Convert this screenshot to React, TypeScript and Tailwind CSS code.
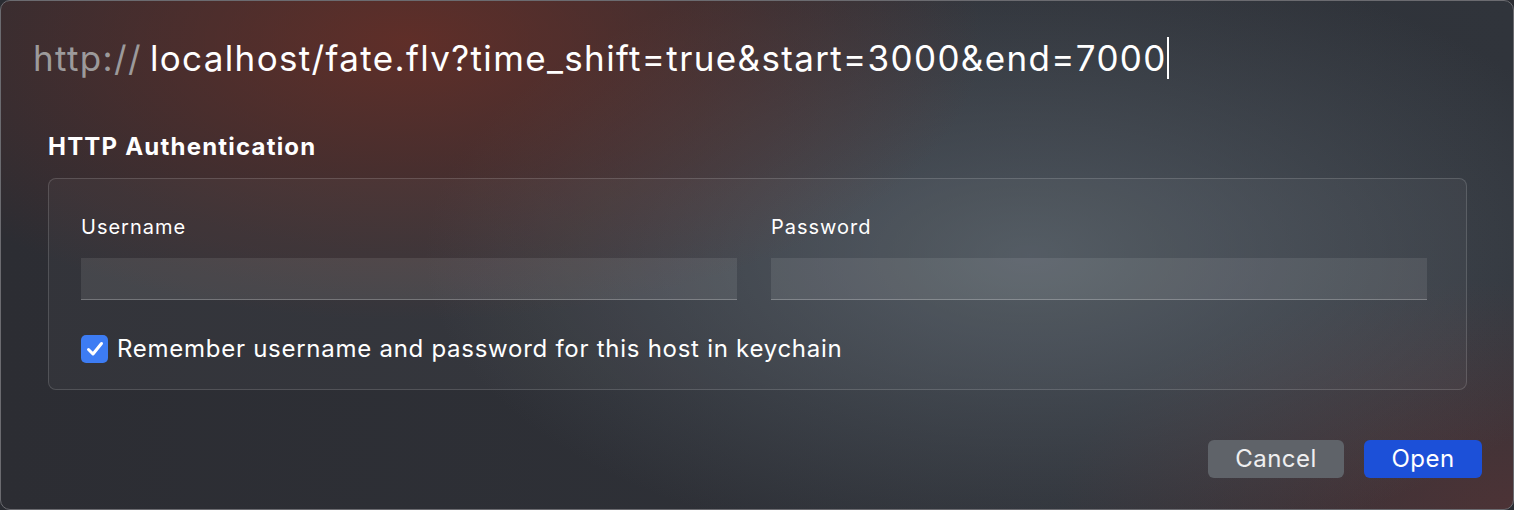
import React from "react";

export default function App() {
  const font = { fontFamily: '"Inter", "Noto Sans", sans-serif' };
  return (
    <div
      className="w-[1514px] h-[510px] overflow-hidden bg-[#2a2c32]"
      style={font}
    >
      <div className="relative w-full h-full rounded-[10px] border border-[#6b6b70] overflow-hidden bg-[radial-gradient(ellipse_38%_55%_at_27%_8%,rgba(112,46,36,0.75),transparent),radial-gradient(ellipse_40%_60%_at_68%_50%,rgba(95,106,116,0.65),transparent),radial-gradient(ellipse_30%_45%_at_100%_100%,rgba(95,50,50,0.6),transparent),linear-gradient(90deg,#2c2d33,#30343b)]">
        <div className="flex flex-col h-full">
          <div className="pl-[32px] pt-[31px] h-[131px] flex items-start">
            <div className="flex items-center text-[35px] leading-[52px] tracking-[1.35px]">
              <span className="text-[#9c9a9b]">http://</span>
              <span className="text-white ml-[8px]">localhost/fate.flv?time_shift=true&amp;start=3000&amp;end=7000</span>
              <span className="w-[2px] h-[42px] bg-white ml-[0px]" />
            </div>
          </div>
          <div className="pl-[47px] pr-[46px]">
            <div className="text-white font-bold text-[24px] leading-[30px] h-[36px] tracking-[1.2px]">HTTP Authentication</div>
            <div className="mt-[10px] h-[212px] rounded-[8px] border border-white/15 bg-white/[0.035] pl-[32px] pr-[39px] pt-[33px]">
              <div className="grid grid-cols-[656px_656px] gap-x-[34px]">
                <div className="flex flex-col">
                  <div className="text-white text-[20px] leading-[30px] h-[46px] tracking-[1px]">Username</div>
                  <div className="h-[42px] bg-white/[0.09] border-b border-white/25" />
                </div>
                <div className="flex flex-col">
                  <div className="text-white text-[20px] leading-[30px] h-[46px] tracking-[1px]">Password</div>
                  <div className="h-[42px] bg-white/[0.09] border-b border-white/25" />
                </div>
              </div>
              <div className="mt-[34px] flex items-center gap-[9px]">
                <div className="w-[27px] h-[28px] rounded-[5px] bg-[#3d7cf3] flex items-center justify-center">
                  <svg width="18" height="16" viewBox="0 0 18 16" fill="none">
                    <path d="M2.5 8.5 L7 13 L15.5 2.5" stroke="white" strokeWidth="3" strokeLinecap="round" strokeLinejoin="round" />
                  </svg>
                </div>
                <span className="text-white text-[24px] leading-[30px] tracking-[0.73px]">Remember username and password for this host in keychain</span>
              </div>
            </div>
          </div>
          <div className="mt-auto pb-[31px] pr-[31px] flex justify-end gap-[20px]">
            <button className="w-[136px] h-[38px] rounded-[6px] bg-[#5f6369] text-white/90 text-[24px] leading-[38px] tracking-[0.5px]">Cancel</button>
            <button className="w-[118px] h-[38px] rounded-[6px] bg-[#1c50d8] text-white text-[24px] leading-[38px] tracking-[0.5px]">Open</button>
          </div>
        </div>
      </div>
    </div>
  );
}
